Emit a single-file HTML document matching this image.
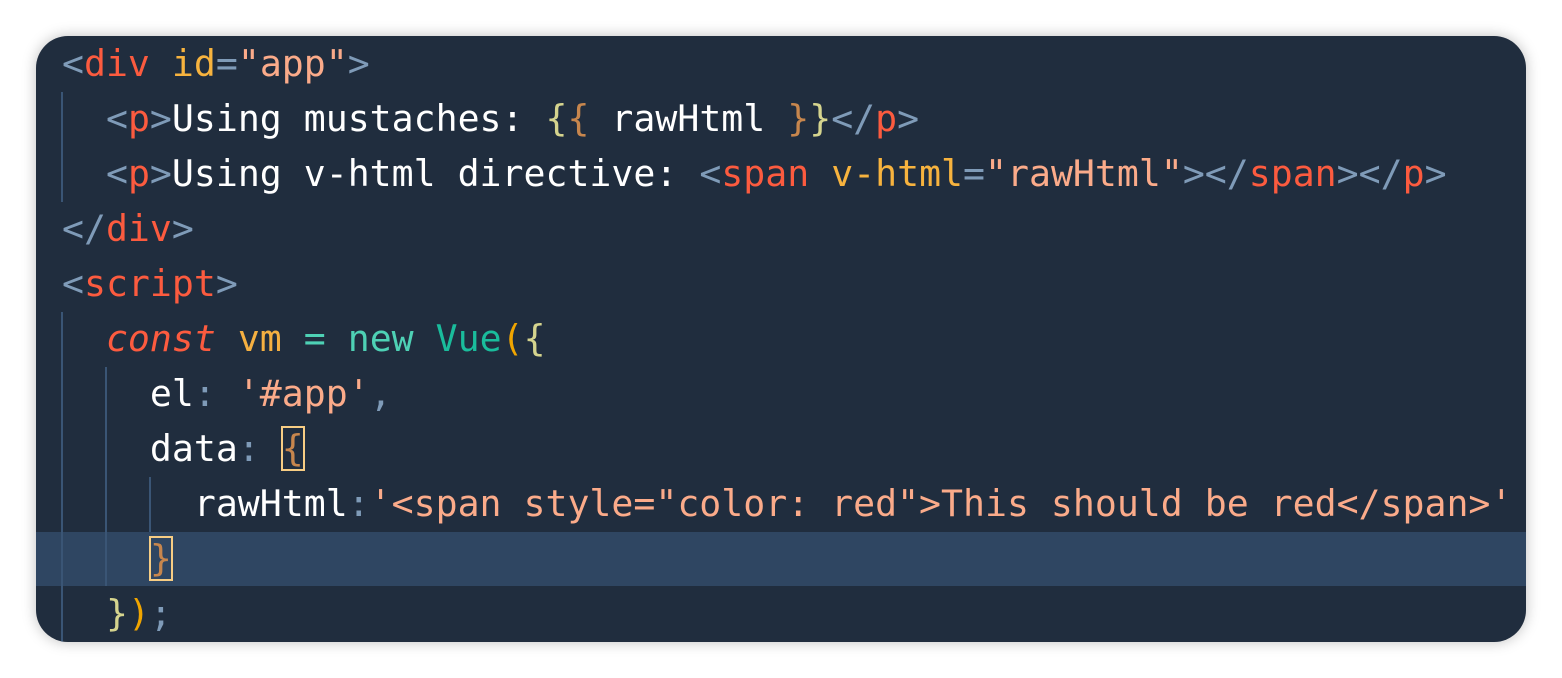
<!DOCTYPE html>
<html><head><meta charset="utf-8"><style>
html,body{margin:0;padding:0;background:#fff;width:1562px;height:678px;overflow:hidden}
.box{position:absolute;left:36px;top:36px;width:1490px;height:606px;background:#202d3e;border-radius:32px;box-shadow:0 0 14px rgba(0,0,0,.25);overflow:hidden}
.hl{position:absolute;left:0;top:496px;width:1490px;height:54px;background:#2f4662}
.g{position:absolute;width:2px;background:#3a5575}
.code{position:absolute;left:26px;top:0px;margin:0;font-family:"DejaVu Sans Mono","Liberation Mono",monospace;font-size:36.5px;line-height:55px;color:#fff;white-space:pre}
.b{color:#7f9bb8}.t{color:#fc5b3f}.a{color:#f7b33e}.s{color:#fbab8a}.k{color:#fc5b3f;font-style:italic}.v{color:#f5b041}.q{color:#4ed1b5}.c{color:#1abc9c}.p{color:#f0a500}.y{color:#d5d48e}.o{color:#c7864d}
.bx{outline:2px solid #f7cd84;outline-offset:-1px}
</style></head><body>
<div class="box">
<div class="hl"></div>
<div class="g" style="left:25px;top:56px;height:110px"></div>
<div class="g" style="left:25px;top:276px;height:330px"></div>
<div class="g" style="left:69px;top:331px;height:219px"></div>
<div class="g" style="left:113px;top:441px;height:55px"></div>
<pre class="code"><span class="b">&lt;</span><span class="t">div</span> <span class="a">id</span><span class="b">=</span><span class="s">"app"</span><span class="b">&gt;</span>
  <span class="b">&lt;</span><span class="t">p</span><span class="b">&gt;</span>Using mustaches: <span class="y">{</span><span class="o">{</span> rawHtml <span class="o">}</span><span class="y">}</span><span class="b">&lt;/</span><span class="t">p</span><span class="b">&gt;</span>
  <span class="b">&lt;</span><span class="t">p</span><span class="b">&gt;</span>Using v-html directive: <span class="b">&lt;</span><span class="t">span</span> <span class="a">v-html</span><span class="b">=</span><span class="s">"rawHtml"</span><span class="b">&gt;&lt;/</span><span class="t">span</span><span class="b">&gt;&lt;/</span><span class="t">p</span><span class="b">&gt;</span>
<span class="b">&lt;/</span><span class="t">div</span><span class="b">&gt;</span>
<span class="b">&lt;</span><span class="t">script</span><span class="b">&gt;</span>
  <span class="k">const</span> <span class="v">vm</span> <span class="q">=</span> <span class="q">new</span> <span class="c">Vue</span><span class="p">(</span><span class="y">{</span>
    el<span class="b">:</span> <span class="s">'#app'</span><span class="b">,</span>
    data<span class="b">:</span> <span class="o bx">{</span>
      rawHtml<span class="b">:</span><span class="s">'&lt;span style="color: red"&gt;This should be red&lt;/span&gt;'</span>
    <span class="o bx">}</span>
  <span class="y">}</span><span class="p">)</span><span class="b">;</span></pre>
</div>
</body></html>
